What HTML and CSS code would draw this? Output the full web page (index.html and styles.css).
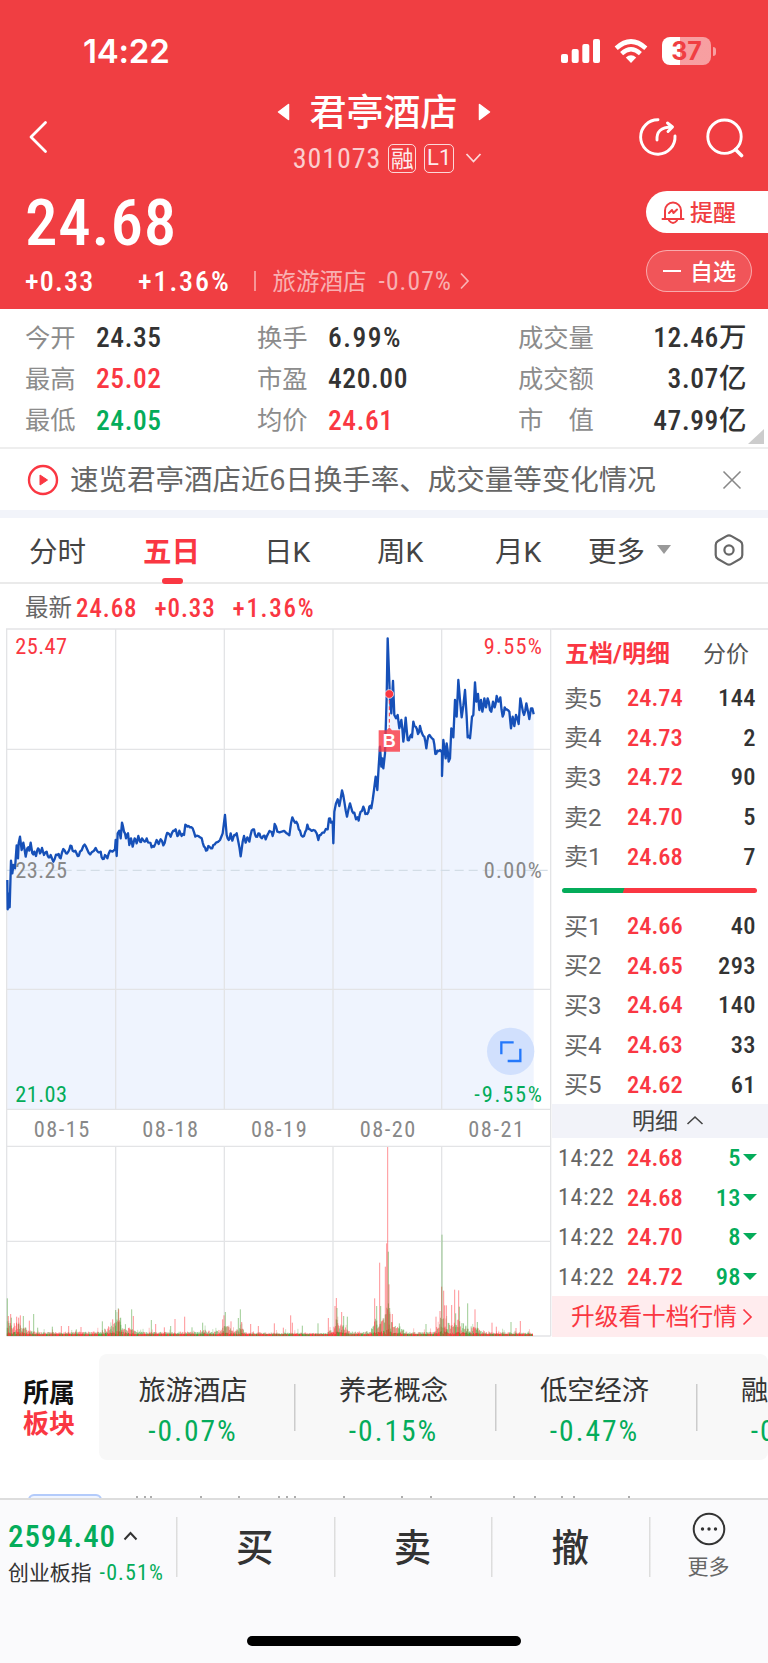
FILE: index.html
```html
<!DOCTYPE html>
<html lang="zh-CN">
<head>
<meta charset="utf-8">
<title>君亭酒店 301073</title>
<link rel="stylesheet" href="styles.css">
</head>
<body>
<div class="screen">
  <header class="hero">
    <div class="status">
      <span class="clock">14:22</span>
      <div class="status-icons">
        <svg class="signal" width="39" height="24" viewBox="0 0 39 24" fill="#fff"><rect x="0" y="15" width="7" height="9" rx="2"/><rect x="10.700" y="10" width="7" height="14" rx="2"/><rect x="21.300" y="5" width="7" height="19" rx="2"/><rect x="32" y="0" width="7" height="24" rx="2"/></svg>
        <svg class="wifi" width="34" height="24" viewBox="0 0 34 24"><path d="M2.200 9.200Q17-4.200 31.800 9.200" fill="none" stroke="#fff" stroke-width="4.600"/><path d="M7.600 14.600Q17 6 26.400 14.600" fill="none" stroke="#fff" stroke-width="4.400"/><path d="M17 24l-5.200-5.600q5.200-4.200 10.400 0z" fill="#fff"/></svg>
        <div class="battery"><span class="battery-body">37</span><i class="battery-tip"></i></div>
      </div>
    </div>
    <div class="navbar">
      <svg class="back" width="20" height="34" viewBox="0 0 20 34"><path d="M17.500 2.500L3 17l14.500 14.500" fill="none" stroke="#fff" stroke-width="2.800" stroke-linecap="round" stroke-linejoin="round"/></svg>
      <div class="heading">
        <div class="name-row">
          <svg width="13" height="18" viewBox="0 0 13 18"><path d="M11.500 1.500v15L1.500 9z" fill="#fff" stroke="#fff" stroke-width="1.500" stroke-linejoin="round"/></svg>
          <h1>君亭酒店</h1>
          <svg width="13" height="18" viewBox="0 0 13 18"><path d="M1.500 1.500v15L11.500 9z" fill="#fff" stroke="#fff" stroke-width="1.500" stroke-linejoin="round"/></svg>
        </div>
        <div class="code-row">
          <span class="code num">301073</span><span class="badge">融</span><span class="badge badge-l">L1</span>
          <svg width="17" height="12" viewBox="0 0 17 12"><path d="M1.500 2L8.500 9.500 15.500 2" fill="none" stroke="#fff" stroke-opacity=".8" stroke-width="1.800"/></svg>
        </div>
      </div>
      <div class="nav-icons">
        <svg width="40" height="42" viewBox="0 0 40 42" fill="none" stroke="#fff" stroke-width="2.900" stroke-linecap="round" stroke-linejoin="round"><path d="M20 3.800A17.200 17.200 0 1 0 37 20"/><path d="M19 24c-.5-8 3.500-13 15-13M29.500 7l5 4-4.500 4.500"/></svg>
        <svg width="40" height="42" viewBox="0 0 40 42" fill="none" stroke="#fff" stroke-width="2.900" stroke-linecap="round"><circle cx="19.500" cy="20.700" r="16.700"/><path d="M30.500 33.500l6 6" stroke-width="3.600"/></svg>
      </div>
    </div>
    <div class="quote">
      <div class="quote-main">
        <div class="price num">24.68</div>
        <div class="change">
          <span class="num c1">+0.33</span><span class="num c2">+1.36%</span><i class="bar"></i><span class="ind">旅游酒店</span><span class="num ind-pct">-0.07%</span>
          <svg width="11" height="18" viewBox="0 0 11 18"><path d="M2 1.500L9 9l-7 7.500" fill="none" stroke="#fff" stroke-opacity=".6" stroke-width="1.700"/></svg>
        </div>
      </div>
      <div class="quote-actions">
        <div class="pill pill-alert">
          <svg width="24" height="25" viewBox="0 0 24 25" fill="none" stroke="#f03e42" stroke-width="2" stroke-linecap="round" stroke-linejoin="round"><path d="M4 18.500V10.500a8 8 0 0 1 16 0v8M1.500 19h21M8 20.500q4 5 8 0M8 13l3-3 1.500 3L16 9.500"/></svg>
          <span>提醒</span>
        </div>
        <div class="pill pill-watch"><i></i><span>自选</span></div>
      </div>
    </div>
  </header>

  <section class="stats">
    <dl class="s1"><dt>今开</dt><dd class="num">24.35</dd><dt>最高</dt><dd class="num up">25.02</dd><dt>最低</dt><dd class="num down">24.05</dd></dl>
    <dl class="s2"><dt>换手</dt><dd class="num pct">6.99%</dd><dt>市盈</dt><dd class="num">420.00</dd><dt>均价</dt><dd class="num up">24.61</dd></dl>
    <dl class="s3"><dt>成交量</dt><dd class="num">12.46万</dd><dt>成交额</dt><dd class="num">3.07亿</dd><dt>市　值</dt><dd class="num">47.99亿</dd></dl>
    <i class="corner"></i>
  </section>

  <div class="notice">
    <svg width="32" height="32" viewBox="0 0 32 32"><circle cx="16" cy="16" r="14" fill="none" stroke="#fa3742" stroke-width="2.400"/><path d="M13 11v10l7.500-5z" fill="#fa3742" stroke="#fa3742" stroke-linejoin="round"/></svg>
    <span>速览君亭酒店近6日换手率、成交量等变化情况</span>
    <svg class="close" width="20" height="20" viewBox="0 0 20 20"><path d="M1.500 1.500l17 17M18.500 1.500l-17 17" stroke="#888" stroke-width="1.600"/></svg>
  </div>

  <nav class="tabs">
    <span class="t1">分时</span><span class="t2 active">五日</span><span class="t3">日K</span><span class="t4">周K</span><span class="t5">月K</span>
    <span class="t6">更多<i></i></span>
    <svg width="30" height="32" viewBox="0 0 30 32" fill="none" stroke="#666" stroke-width="2.200" stroke-linejoin="round"><path d="M12.500 2.100q2.500-1.400 5 0L26 7q2.300 1.300 2.300 4v10q0 2.700-2.300 4l-8.500 4.900q-2.500 1.400-5 0L4 25q-2.300-1.300-2.300-4V11q0-2.700 2.300-4z"/><circle cx="15" cy="16" r="4.600"/></svg>
  </nav>

  <div class="latest"><span class="lbl">最新</span><span class="num">24.68</span><span class="num">+0.33</span><span class="num pct">+1.36%</span></div>

  <main class="market">
    <svg class="chart" width="546" height="709" viewBox="18 24 1638 2127">
      <path id="area" fill="#eff4fe"/>
      <g stroke="#e3e4e6" stroke-width="4" fill="none">
        <path d="M18 27H1656M20 388H1652M20 1108H1652M20 1468H1652M20 1579H1652M20 1864H1652M20 2148H1652"/>
        <path d="M20 27V2148M1652 27V2148M347 27V1468M673 27V1468M999 27V1468M1325 27V1468M347 1579V2148M673 1579V2148M999 1579V2148M1325 1579V2148"/>
      </g>
      <path d="M20 751H1652" stroke="#d3dde6" stroke-width="4" stroke-dasharray="27 15"/>
      <g id="volume"></g>
      <path id="line" fill="none" stroke="#1650b8" stroke-width="7" stroke-linejoin="round"/>
      <path d="M1168 240V320" stroke="#fa3742" stroke-width="3" stroke-dasharray="11 8"/>
      <circle cx="1168" cy="222" r="13" fill="#fa3742" stroke="#fff" stroke-width="2"/>
      <path d="M1136 331h24l8-9 8 9h24v64h-64z" fill="#fa3742" fill-opacity=".8"/>
      <g class="chart-text num">
        <text x="1168" y="381" class="mark" text-anchor="middle">B</text>
        <text x="46" y="103" class="tu" textLength="155">25.47</text>
        <text x="46" y="774" class="tg" textLength="155">23.25</text>
        <text x="46" y="1445" class="td" textLength="155">21.03</text>
        <text x="1451" y="103" class="tu" textLength="175">9.55%</text>
        <text x="1451" y="774" class="tg" textLength="175">0.00%</text>
        <text x="1423" y="1445" class="td" textLength="203">-9.55%</text>
        <text x="101" y="1551" class="tg" textLength="167">08-15</text>
        <text x="427" y="1551" class="tg" textLength="167">08-18</text>
        <text x="753" y="1551" class="tg" textLength="167">08-19</text>
        <text x="1079" y="1551" class="tg" textLength="167">08-20</text>
        <text x="1405" y="1551" class="tg" textLength="167">08-21</text>
      </g>
      <circle cx="1532" cy="1294" r="71" fill="#d1e0fd"/>
      <path d="M1504 1303V1267H1541M1561 1286V1323H1523" fill="none" stroke="#2478fb" stroke-width="7"/>
    </svg>

    <aside class="book">
      <div class="book-head"><b>五档/明细</b><span>分价</span></div>
      <div class="rows">
        <div class="row"><span>卖5</span><b class="num">24.74</b><em class="num">144</em></div>
        <div class="row"><span>卖4</span><b class="num">24.73</b><em class="num">2</em></div>
        <div class="row"><span>卖3</span><b class="num">24.72</b><em class="num">90</em></div>
        <div class="row"><span>卖2</span><b class="num">24.70</b><em class="num">5</em></div>
        <div class="row"><span>卖1</span><b class="num">24.68</b><em class="num">7</em></div>
      </div>
      <div class="ratio"></div>
      <div class="rows">
        <div class="row"><span>买1</span><b class="num">24.66</b><em class="num">40</em></div>
        <div class="row"><span>买2</span><b class="num">24.65</b><em class="num">293</em></div>
        <div class="row"><span>买3</span><b class="num">24.64</b><em class="num">140</em></div>
        <div class="row"><span>买4</span><b class="num">24.63</b><em class="num">33</em></div>
        <div class="row"><span>买5</span><b class="num">24.62</b><em class="num">61</em></div>
      </div>
      <div class="detail-head"><span>明细</span><svg width="18" height="11" viewBox="0 0 18 11"><path d="M1.500 9L9 2l7.500 7" fill="none" stroke="#444" stroke-width="1.600"/></svg></div>
      <div class="rows trades">
        <div class="row"><span class="num">14:22</span><b class="num">24.68</b><em class="num">5<i></i></em></div>
        <div class="row"><span class="num">14:22</span><b class="num">24.68</b><em class="num">13<i></i></em></div>
        <div class="row"><span class="num">14:22</span><b class="num">24.70</b><em class="num">8<i></i></em></div>
        <div class="row"><span class="num">14:22</span><b class="num">24.72</b><em class="num">98<i></i></em></div>
      </div>
      <div class="upgrade"><span>升级看十档行情</span><svg width="11" height="18" viewBox="0 0 11 18"><path d="M1.500 1.500L9 9l-7.500 7.500" fill="none" stroke="#fa3742" stroke-width="1.700"/></svg></div>
    </aside>
  </main>

  <section class="sectors">
    <div class="sectors-title"><span>所属</span><span class="up">板块</span></div>
    <div class="sectors-list">
      <div class="sector"><span>旅游酒店</span><b class="num">-0.07%</b></div>
      <div class="sector"><span>养老概念</span><b class="num">-0.15%</b></div>
      <div class="sector"><span>低空经济</span><b class="num">-0.47%</b></div>
      <div class="sector"><span>融资融券</span><b class="num">-0.12%</b></div>
    </div>
  </section>
  <div class="peek">
    <i></i>
    <svg width="520" height="3" viewBox="0 0 520 3"><path d="M11 1v2M19 1v2M25 1v2M75 1v2M113 1v2M153 1v2M161 1v2M169 1v2M218 1v2M276 1v2M305 1v2M388 1v2M409 1v2M436 1v2M448 1v2M503 1v2" stroke="#999" stroke-width="1.600"/></svg>
  </div>

  <footer class="trade-bar">
    <div class="index">
      <div class="index-top"><b class="num">2594.40</b><svg width="15" height="10" viewBox="0 0 15 10"><path d="M1.500 8.500l6-6.500 6 6.500" fill="none" stroke="#333" stroke-width="2"/></svg></div>
      <div class="index-sub"><span>创业板指</span><b class="num">-0.51%</b></div>
    </div>
    <div class="act">买</div><div class="act">卖</div><div class="act">撤</div>
    <div class="more"><svg width="34" height="34" viewBox="0 0 34 34"><circle cx="17" cy="17" r="15.300" fill="none" stroke="#333" stroke-width="2"/><g fill="#333"><circle cx="10.500" cy="17" r="1.700"/><circle cx="17" cy="17" r="1.700"/><circle cx="23.500" cy="17" r="1.700"/></g></svg><span>更多</span></div>
  </footer>
  <div class="home"><i></i></div>
</div>
<script src="chart.js"></script>
</body>
</html>
```
FILE: styles.css
```css
*{box-sizing:border-box;margin:0;padding:0}
body{width:768px;background:#fff;font-family:Roboto,"Noto Sans CJK SC",sans-serif;color:#333}
i,em{font-style:normal}
b{font-weight:500}
svg{display:block;flex:none}
span,b,em,h1,dt,dd{white-space:nowrap}
.num{font-stretch:87%}
.screen{width:768px;height:1663px;overflow:hidden;display:flex;flex-direction:column}
.up{color:#fa3742}
.down{color:#04ac5a}
.hero{height:309px;background:#f03e42;color:#fff;flex:none}
.status{height:90px;padding:12px 52px 0 83px;display:flex;justify-content:space-between;align-items:center}
.clock{font:600 33px/40px Inter,sans-serif;letter-spacing:-.2px}
.status-icons{display:flex;align-items:center}
.wifi{margin:0 14px}
.battery{display:flex;align-items:center}
.battery-body{width:49px;height:28px;border-radius:8px;background:linear-gradient(90deg,#fff 37%,rgba(255,255,255,.5) 37%);color:#f03e42;font:700 25px/28px Inter,sans-serif;text-align:center}
.battery-tip{width:3px;height:9px;margin-left:2px;border-radius:0 4px 4px 0;background:rgba(255,255,255,.5)}
.navbar{height:93px;padding:0 23px 0 28px;display:grid;grid-template-columns:108px 1fr 114px;align-items:center}
.heading{display:flex;flex-direction:column;align-items:center}
.name-row{height:48px;display:flex;align-items:center;gap:20px;margin-top:-5px}
.name-row h1{font:500 37px/44px "Noto Sans CJK SC",sans-serif;padding-bottom:4px}
.code-row{height:44px;display:flex;align-items:center;padding-left:8px}
.code{font-size:28px;letter-spacing:.9px;color:rgba(255,255,255,.75);margin-right:7px}
.badge{width:28px;height:29px;border:1.500px solid rgba(255,255,255,.8);border-radius:5px;font:23px/24px "Noto Sans CJK SC",sans-serif;text-align:center;margin-right:8px;color:rgba(255,255,255,.92)}
.badge-l{width:30px;font:22px/26px Roboto,sans-serif;margin-right:11px}
.nav-icons{display:flex;justify-content:flex-end;gap:27px}
.quote{height:126px;display:flex;justify-content:space-between}
.quote-main{padding-left:25px}
.price{font-size:65px;line-height:80px;font-weight:500;letter-spacing:.8px}
.change{height:36px;display:flex;align-items:center;font-size:28px}
.c1,.c2{font-weight:500}
.c1{width:113px;letter-spacing:1.200px}
.c2{width:116px;letter-spacing:1.900px}
.bar{width:1.500px;height:20px;background:rgba(255,255,255,.45);margin-right:17px}
.ind{font-size:23.500px;width:106px;color:rgba(255,255,255,.6);padding-bottom:3px}
.ind-pct{font-size:25.500px;width:80px;letter-spacing:1.100px;color:rgba(255,255,255,.6)}
.quote-actions{width:122px;padding-top:8px;display:flex;flex-direction:column;gap:17px}
.pill{height:42px;display:flex;align-items:center;font:500 23px/38px "Noto Sans CJK SC",sans-serif}
.pill span{padding-bottom:3px}
.pill-alert{background:#fff;color:#f03e42;border-radius:21px 0 0 21px;padding-left:15px;gap:5px}
.pill-watch{width:106px;border:1.500px solid rgba(255,255,255,.5);background:rgba(255,255,255,.12);border-radius:21px;padding-left:16px;gap:9px}
.pill-watch i{width:18px;height:2px;background:#fff}
.stats{height:140px;flex:none;border-bottom:2px solid #eee;padding:8px 21px 0 25px;display:flex;position:relative}
.stats dl{display:grid;grid-auto-rows:41.300px;align-content:start;align-items:center}
.stats dt{font-size:25.300px;color:#8c8c8c;padding-bottom:4px}
.stats dd{font-size:27.500px;font-weight:500;line-height:41px;letter-spacing:.6px}
.stats .pct{letter-spacing:1.500px}
.s1{width:232px;grid-template-columns:71px 1fr}
.s2{width:261px;grid-template-columns:71px 1fr}
.s3{flex:1;grid-template-columns:80px 1fr}
.s3 dd{text-align:right}
.corner{position:absolute;right:4px;bottom:3px;border-style:solid;border-width:0 0 15px 16px;border-color:transparent transparent #ccc}
.notice{height:61px;flex:none;display:flex;align-items:center;padding:0 26px 0 27px;color:#666;font:28.500px/40px "Noto Sans CJK SC",sans-serif}
.notice span{margin-left:11px;padding-bottom:4px}
.close{margin-left:auto}
.tabs{height:74px;flex:none;border-top:8px solid #f2f4fa;border-bottom:2px solid #eaeaea;display:grid;grid-template-columns:114px 121px 113px 118px 93px 126px 30px;align-items:center;padding-left:29px;font-size:28.500px;color:#444}
.tabs span{padding-bottom:2px}
.tabs .active{position:relative;color:#fa3742;font-weight:700}
.active::after{content:"";position:absolute;left:19px;bottom:-12px;width:21px;height:6px;border-radius:3px;background:#fa3742}
.t6{display:flex;align-items:center;gap:12px}
.t6 i{border-style:solid;border-width:9px 7.500px 0;border-color:#999 transparent transparent}
.latest{height:44px;flex:none;padding-left:25px;display:flex;align-items:center;font-size:25px;color:#fa3742}
.latest .lbl{font-size:23.500px;color:#666;margin-right:4px}
.latest .num{margin-right:17px;font-weight:500;padding-top:4px;letter-spacing:.9px}
.latest .pct{letter-spacing:1.700px}
.market{height:709px;flex:none;display:flex;padding-left:6px}
.chart-text{font-family:Roboto,sans-serif;font-weight:450;font-size:67px}
.chart-text .mark{font:700 54px "Liberation Sans",sans-serif;fill:#fff}
.tu{fill:#fa3742}.tg{fill:#888}.td{fill:#04ac5a}
.book{flex:1;border-top:2px solid #e8e8ea}
.book-head{height:48px;padding:0 19px 5px 13px;display:flex;justify-content:space-between;align-items:center;font-size:23px;color:#555}
.book-head b{color:#fa3742;font-weight:700;font-size:24px}
.row{height:39.600px;padding:0 12px;display:grid;grid-template-columns:63px 1fr auto;align-items:center;font-size:24.500px}
.row span{color:#666;font-size:24px;padding-bottom:3px}
.row b{color:#fa3742}
.row em{font-weight:500;letter-spacing:.4px}
.ratio{height:5px;margin:12px 11px 13px 10px;border-radius:3px;background:linear-gradient(110deg,#04ac5a 31.500%,#fa3742 32%)}
.detail-head{height:34px;background:#f2f3f9;display:flex;align-items:center;justify-content:center;gap:8px;font-size:23px;color:#444;padding-left:16px}
.detail-head span{padding-bottom:4px}
.trades .row{padding:0 11px 0 6px;grid-template-columns:69px 1fr auto}
.trades .row span{padding:0;letter-spacing:.7px}
.trades em{color:#04ac5a;display:flex;align-items:center;gap:2px}
.trades i{border-style:solid;border-width:7px 7.500px 0;border-color:#04ac5a transparent transparent}
.upgrade{height:41px;background:#ffecee;color:#fa3742;display:flex;align-items:center;padding-left:19px;gap:5px;font-size:23.700px}
.upgrade span{padding-bottom:4px}
.sectors{height:124px;flex:none;padding-top:17px;display:flex}
.sectors-title{width:99px;padding:21px 0 0 23px;display:flex;flex-direction:column;font:700 26px/31px "Noto Sans CJK SC",sans-serif;color:#111}
.sectors-title .up{color:#fa3742}
.sectors-list{width:669px;height:106px;border-radius:8px;background:#f8f8f8;display:flex;overflow:hidden}
.sector{flex:0 0 201px;height:106px;padding-top:17px;display:flex;flex-direction:column;align-items:center}
.sector:first-child{flex-basis:195px;padding-right:7px}
.sector span{font-size:27.300px;line-height:40px}
.sector b{font-size:29.500px;line-height:41px;color:#04ac5a;font-weight:450;letter-spacing:2px}
.sector+.sector{padding-right:2px;background:linear-gradient(#ccc,#ccc) 0 30px/1.500px 47px no-repeat}
.peek{height:37px;flex:none;padding:33px 0 0 28px;display:flex;overflow:hidden}
.peek i{width:74px;height:20px;flex:none;border:2px solid #b3cbfb;background:#f0f5ff;border-radius:6px 6px 0 0}
.peek svg{margin:1px 0 0 24px}
.trade-bar{height:100px;flex:none;border-top:2px solid #ddd;background:#fafafc;display:flex}
.index{width:176px;padding:17px 0 0 8px}
.index b{color:#04ac5a}
.index-top{display:flex;align-items:center;gap:7px;height:38px;font-size:31px;letter-spacing:.9px}
.index-sub{display:flex;align-items:center;gap:8px;height:34px;font-size:22px}
.index-sub span{font-size:20.900px;padding-bottom:3px}
.index-sub b{font-weight:400;letter-spacing:1.100px}
.act,.more{background:linear-gradient(#ddd,#ddd) 0 17px/1.500px 60px no-repeat}
.act{width:157.700px;text-align:center;font:500 37.500px/89px "Noto Sans CJK SC",sans-serif}
.more{flex:1;display:flex;flex-direction:column;align-items:center;padding-top:12px;font-size:21px;color:#666}
.more span{line-height:30px;margin-top:6px}
.home{flex:1;background:#fafafc;display:flex;justify-content:center;align-items:flex-end;padding-bottom:17px}
.home i{width:274px;height:10px;border-radius:5px;background:#000}
```
FILE: chart.js
```js
// Minute prices over five sessions, in chart units (3 per CSS pixel).
const prices = `22,780 23,868 27,820 29,862 33,722 37,760 40,735 45,745 50,676 54,715 56,670 60,650 65,690 70,668 74,690 77,710 82,685 88,692 92,668 97,700 103,695 108,708 114,685 120,700 126,684 132,705 140,695 146,712 152,705 160,725 168,704 176,702 182,715 190,687 198,700 205,695 211,677 218,692 226,692 233,708 240,695 250,678 258,680 266,698 275,697 287,684 295,697 302,695 308,717 315,705 322,715 330,692 345,688 347,660 350,708 353,640 358,632 362,655 366,608 372,635 378,655 384,640 388,675 393,655 398,680 404,655 410,670 415,648 420,665 426,655 434,665 440,655 448,668 455,682 462,680 470,660 476,672 482,658 490,676 498,650 505,640 512,650 520,632 527,628 532,648 538,632 545,648 552,645 556,614 562,620 570,622 578,625 586,650 595,648 605,655 612,680 618,692 625,678 633,685 640,675 648,668 660,660 668,640 675,585 680,645 686,660 692,640 697,662 703,645 710,640 715,665 722,709 728,665 732,648 737,668 742,652 748,665 755,632 762,628 768,650 775,640 782,652 790,648 797,658 805,640 812,635 818,648 824,612 832,635 845,635 860,640 868,646 873,610 877,592 885,608 893,613 900,632 908,650 916,635 922,614 930,628 940,630 950,640 955,660 962,645 972,638 983,628 987,596 993,608 998,605 1000,670 1003,575 1008,550 1013,538 1018,558 1026,511 1033,545 1041,590 1045,570 1050,550 1057,575 1063,578 1068,598 1073,592 1076,602 1082,575 1090,560 1096,582 1102,582 1108,560 1114,565 1118,540 1122,510 1127,470 1132,510 1136,440 1140,380 1144,440 1147,415 1150,445 1155,400 1160,230 1163,55 1167,160 1170,240 1174,280 1179,183 1183,285 1188,295 1193,285 1198,325 1204,300 1210,365 1217,293 1223,360 1230,350 1236,352 1240,305 1247,320 1254,342 1260,318 1266,340 1273,350 1279,385 1285,348 1292,350 1300,358 1306,402 1312,392 1320,390 1326,392 1326,468 1330,360 1337,415 1340,370 1346,425 1350,415 1354,325 1360,352 1365,240 1370,290 1375,180 1380,240 1385,292 1395,210 1400,290 1403,352 1410,355 1416,290 1420,285 1425,187 1429,245 1434,222 1438,270 1443,240 1447,275 1453,235 1458,262 1463,235 1470,270 1474,275 1479,245 1484,262 1490,228 1495,245 1501,232 1508,290 1514,262 1520,268 1528,275 1533,325 1538,290 1543,318 1548,285 1556,312 1561,235 1566,260 1572,285 1579,250 1588,297 1593,265 1597,265 1601,283`
  .split(" ").map(p => p.split(",").map(Number));

let seed = 7;
const rand = () => (seed = (seed * 16807) % 2147483647) / 2147483647;

// Small ticks between the minutes keep the line's grain.
const pts = [prices[0]];
for (let i = 1; i < prices.length; i++) {
  const [x0, y0] = prices[i - 1], [x1, y1] = prices[i];
  if (x1 - x0 > 5) pts.push([(x0 + x1) / 2, (y0 + y1) / 2 + (rand() - .5) * 14]);
  pts.push([x1, y1]);
}
const d = "M" + pts.map(p => p[0] + " " + p[1].toFixed(1)).join("L");
document.getElementById("line").setAttribute("d", d);
document.getElementById("area").setAttribute("d", d + "V1468H22Z");

// Typical bar height along the axis, then the single tall bars.
const level = [[20,35],[60,38],[80,18],[110,8],[300,10],[340,35],[352,60],[380,28],[410,9],[590,9],[610,18],[640,7],[660,18],[680,32],[700,12],[725,22],[745,7],[980,6],[998,22],[1010,50],[1030,30],[1050,9],[1110,10],[1125,50],[1140,40],[1155,60],[1163,110],[1172,50],[1200,25],[1220,7],[1300,9],[1318,45],[1330,65],[1350,30],[1375,50],[1395,30],[1430,22],[1460,8],[1600,6]];
const spikes = `22,113,g 25,60,r 32,66,r 34,55,g 50,58,r 56,55,r 61,62,r 70,60,g 88,46,r 101,66,g 113,25,g 157,28,g 184,30,r 206,30,r 229,20,g 243,27,r 307,44,g 338,50,r 347,78,g 355,83,g 356,80,r 362,55,g 395,80,g 400,60,r 454,48,g 467,36,r 493,26,r 512,30,g 525,51,r 554,58,r 576,26,g 608,40,g 668,50,r 672,62,r 676,72,g 693,44,r 715,54,g 721,80,g 725,42,r 752,36,r 775,30,r 823,38,r 850,25,r 872,62,r 877,40,r 907,31,g 954,38,g 985,54,r 1005,90,r 1009,114,r 1011,84,g 1025,72,r 1031,60,g 1042,58,g 1124,113,r 1130,90,g 1139,220,r 1142,90,g 1156,208,r 1160,278,r 1163,567,r 1165,253,g 1167,155,r 1169,84,g 1177,66,r 1198,38,g 1278,36,g 1308,58,r 1320,75,r 1325,148,r 1326,304,g 1331,136,r 1334,92,r 1339,92,r 1355,93,r 1364,139,r 1367,68,g 1376,137,r 1378,88,g 1403,98,g 1425,80,r 1432,42,g 1476,40,r 1489,28,r 1533,42,g 1548,24,r 1561,45,r`;
let bars = "";
const bar = (x, h, c, o) => bars += `<rect x="${x - 1.5}" y="${(2148 - h).toFixed(1)}" width="3" height="${h.toFixed(1)}" fill="${c === "r" ? "#ff2a30" : "#3f9b2c"}" opacity="${o}"/>`;
for (let x = 22; x <= 1599; x += 2.3) {
  let k = 1;
  while (k < level.length - 1 && level[k][0] < x) k++;
  const [xa, ha] = level[k - 1], [xb, hb] = level[k];
  const h = ha + (hb - ha) * Math.min(1, (x - xa) / (xb - xa));
  const c = rand() > .5 ? "r" : "g";
  bar(x, 4 + h * (.3 + rand() * .7), c, .5);
  if (rand() > .88) bar(x, h + 16 * rand(), c, .28);
  bar(x, 5 + h * .2 * rand(), rand() > .35 ? "r" : "g", .8);
}
for (const s of spikes.split(" ")) {
  const [x, h, c] = s.split(",");
  bar(+x, +h, c, .5);
}
document.getElementById("volume").innerHTML = bars;
```
